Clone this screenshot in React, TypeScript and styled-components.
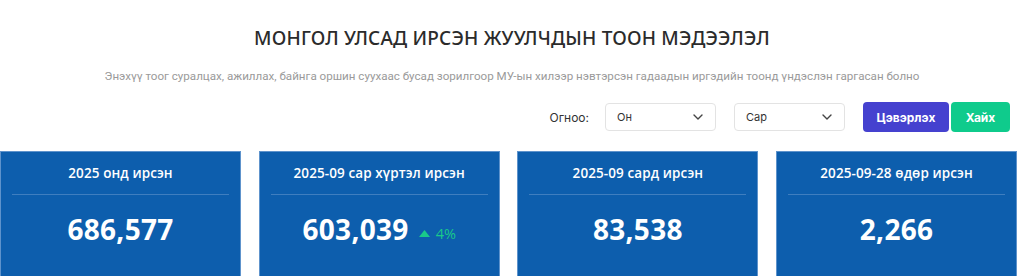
import React from 'react';
import styled, { createGlobalStyle } from 'styled-components';

const GlobalStyle = createGlobalStyle`
  body {
    margin: 0;
    background: #fff;
    font-family: "Open Sans", "Liberation Sans", sans-serif;
  }
`;

const Page = styled.div`
  width: 1024px;
  height: 276px;
  overflow: hidden;
  padding-top: 24px;
  box-sizing: border-box;
`;

const Title = styled.h1`
  margin: 0;
  text-align: center;
  font-family: "Noto Sans", "Open Sans", sans-serif;
  font-weight: 500;
  font-size: 19px;
  line-height: 28px;
  color: #2b2b2b;
  letter-spacing: 0.2px;
`;

const Subtitle = styled.p`
  margin: 16px 0 0;
  text-align: center;
  font-family: "Liberation Sans Narrow", "Roboto", sans-serif;
  font-size: 11.6px;
  line-height: 16px;
  color: #9a9a9a;
`;

const Filters = styled.div`
  display: flex;
  align-items: center;
  justify-content: flex-end;
  margin-top: 18px;
  padding-right: 14px;
`;

const Label = styled.span`
  font-family: Inter, sans-serif;
  font-size: 12px;
  color: #333;
  margin-right: 16px;
`;

const Select = styled.div`
  width: 111px;
  height: 28px;
  box-sizing: border-box;
  border: 1px solid #e3e3e3;
  border-radius: 4px;
  display: flex;
  align-items: center;
  justify-content: space-between;
  padding: 0 12px 0 11px;
  margin-right: 18px;
  font-family: Inter, sans-serif;
  font-size: 11px;
  color: #333;
`;

const Button = styled.button<{ $color: string; $w: number; $gap?: number }>`
  width: ${p => p.$w}px;
  height: 30px;
  border: none;
  border-radius: 4px;
  background: ${p => p.$color};
  color: #fff;
  font-family: Inter, sans-serif;
  font-weight: 700;
  font-size: 12px;
  margin-left: ${p => p.$gap ?? 0}px;
`;

const Cards = styled.div`
  display: grid;
  grid-template-columns: repeat(4, 241px);
  gap: 17.7px;
  margin-top: 19px;
`;

const Card = styled.div`
  height: 130px;
  box-sizing: border-box;
  background: #0d5ead;
  border: 1px solid #5e93cc;
  border-bottom: none;
  padding: 0 11px;
  color: #fff;
  font-family: "Open Sans", sans-serif;
`;

const CardTitle = styled.div`
  height: 42px;
  border-bottom: 1px solid #3f7ebf;
  display: flex;
  align-items: center;
  justify-content: center;
  font-size: 13.5px;
  font-weight: 600;
  letter-spacing: 0.1px;
`;

const ValueRow = styled.div`
  height: 68px;
  display: flex;
  align-items: center;
  justify-content: center;
  gap: 10px;
`;

const Value = styled.span`
  font-size: 28px;
  font-weight: 700;
  letter-spacing: 0.3px;
`;

const Delta = styled.span`
  display: flex;
  align-items: center;
  gap: 6px;
  color: #19c98a;
  font-size: 14.5px;
  margin-top: 9px;
`;

const Chevron = () => (
  <svg width="10" height="6" viewBox="0 0 10 6" fill="none">
    <path d="M1 1l4 4 4-4" stroke="#444" strokeWidth="1.4" strokeLinecap="round" strokeLinejoin="round" />
  </svg>
);

const cards = [
  { title: '2025 онд ирсэн', value: '686,577' },
  { title: '2025-09 сар хүртэл ирсэн', value: '603,039', delta: '4%' },
  { title: '2025-09 сард ирсэн', value: '83,538' },
  { title: '2025-09-28 өдөр ирсэн', value: '2,266' },
];

export default function App() {
  return (
    <>
      <GlobalStyle />
      <Page>
        <Title>МОНГОЛ УЛСАД ИРСЭН ЖУУЛЧДЫН ТООН МЭДЭЭЛЭЛ</Title>
        <Subtitle>
          Энэхүү тоог суралцах, ажиллах, байнга оршин суухаас бусад зорилгоор МУ-ын хилээр нэвтэрсэн гадаадын иргэдийн тоонд үндэслэн гаргасан болно
        </Subtitle>
        <Filters>
          <Label>Огноо:</Label>
          <Select>
            Он <Chevron />
          </Select>
          <Select>
            Сар <Chevron />
          </Select>
          <Button $color="#4541cf" $w={86}>Цэвэрлэх</Button>
          <Button $color="#0fcb8c" $w={59} $gap={2}>Хайх</Button>
        </Filters>
        <Cards>
          {cards.map(c => (
            <Card key={c.title}>
              <CardTitle>{c.title}</CardTitle>
              <ValueRow>
                <Value>{c.value}</Value>
                {c.delta && (
                  <Delta>
                    <svg width="11" height="7" viewBox="0 0 11 7">
                      <path d="M5.5 0L11 7H0z" fill="#19c98a" />
                    </svg>
                    {c.delta}
                  </Delta>
                )}
              </ValueRow>
            </Card>
          ))}
        </Cards>
      </Page>
    </>
  );
}
